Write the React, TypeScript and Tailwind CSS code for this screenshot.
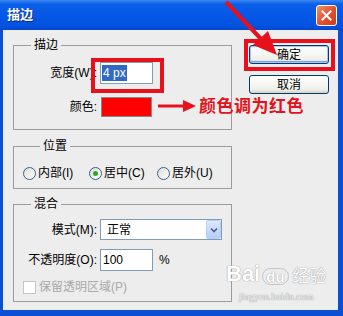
import React from "react";

const font = "font-['Liberation_Sans','Noto_Sans_CJK_SC',sans-serif]";

function Radio({ checked, label, width }: { checked?: boolean; label: string; width: string }) {
  return (
    <div className={`flex items-center gap-[2px] ${width}`}>
      <span className="w-[13px] h-[13px] rounded-full border border-[#3a5f8e] bg-[linear-gradient(135deg,#dcdcd6,#ffffff)] flex items-center justify-center">
        {checked && <span className="w-[5px] h-[5px] rounded-full bg-[#2fa52f]" />}
      </span>
      <span>{label}</span>
    </div>
  );
}

function XpButton({ label, primary }: { label: string; primary?: boolean }) {
  return (
    <button
      className={`w-[80px] h-[19px] rounded-[3px] border border-[#003c74] bg-[linear-gradient(to_bottom,#ffffff,#f0f0ea_80%,#d6d0c5)] text-[12px] leading-none text-black flex items-center justify-center ${
        primary ? "shadow-[inset_0_0_0_1px_#a8c4f0,inset_0_-1px_0_1px_#7aa2e6]" : ""
      }`}
    >
      {label}
    </button>
  );
}

export default function App() {
  return (
    <div className={`relative w-[343px] h-[316px] flex flex-col bg-[#0a4fd6] ${font} text-[12px] text-black overflow-hidden`}>
      {/* title bar */}
      <div className="h-[30px] flex items-center justify-between pl-[7px] pr-[6px] bg-[linear-gradient(to_bottom,#3b86f4_0%,#0a5fe8_14%,#0558e6_50%,#0452e0_85%,#0347cf_100%)]">
        <span className="text-white font-bold text-[13px] [text-shadow:1px_1px_0_#0b2f8a]">描边</span>
        <span className="w-[21px] h-[21px] rounded-[3px] border border-white bg-[linear-gradient(135deg,#f0926f,#e2542f_50%,#c93c1c)] flex items-center justify-center">
          <svg width="11" height="11" viewBox="0 0 11 11">
            <path d="M1.5 1.5 L9.5 9.5 M9.5 1.5 L1.5 9.5" stroke="white" strokeWidth="2" strokeLinecap="square" />
          </svg>
        </span>
      </div>

      {/* body */}
      <div className="flex-1 ml-[3px] mr-[5px] mb-[6px] bg-[#ededed] flex pl-[10px] pt-[8px]">
        <div className="w-[219px] flex flex-col">
          <fieldset className="border border-[#9c9c9c] pt-[10px] pb-[12px]">
            <legend className="ml-[17px] px-[3px] leading-[14px]">描边</legend>
            <div className="flex items-center h-[22px]">
              <span className="w-[83px] text-right">宽度(W):</span>
              <div className="ml-[3px] w-[53px] h-[22px] border border-[#7f9db9] bg-white flex items-center pl-[1px]">
                <span className="bg-[#316ac5] text-white px-[1px] leading-[16px]">4 px</span>
              </div>
            </div>
            <div className="flex items-center h-[20px] mt-[13px]">
              <span className="w-[83px] text-right">颜色:</span>
              <div className="ml-[4px] w-[51px] h-[20px] border border-[#8a8a8a] bg-[#ff0000]" />
            </div>
          </fieldset>

          <fieldset className="mt-[9px] border border-[#9c9c9c] pt-[13px] pb-[8px] pl-[9px]">
            <legend className="ml-[17px] px-[3px] leading-[14px]">位置</legend>
            <div className="flex items-center h-[14px]">
              <Radio label="内部(I)" width="w-[66px]" />
              <Radio label="居中(C)" width="w-[68px]" checked />
              <Radio label="居外(U)" width="w-[60px]" />
            </div>
          </fieldset>

          <fieldset className="mt-[8px] border border-[#9c9c9c] pt-[8px] pb-[7px]">
            <legend className="ml-[17px] px-[3px] leading-[14px]">混合</legend>
            <div className="flex items-center h-[21px]">
              <span className="w-[83px] text-right">模式(M):</span>
              <div className="ml-[3px] w-[122px] h-[21px] border border-[#7f9db9] bg-white flex items-center justify-between">
                <span className="pl-[6px]">正常</span>
                <span className="w-[15px] h-[19px] mr-[0px] rounded-[2px] border border-[#b9cdf5] bg-[linear-gradient(to_bottom,#dce8fd,#b7cdf8)] flex items-center justify-center">
                  <svg width="8" height="6" viewBox="0 0 8 6">
                    <path d="M1 1.5 L4 4.5 L7 1.5" fill="none" stroke="#4d6185" strokeWidth="1.6" />
                  </svg>
                </span>
              </div>
            </div>
            <div className="flex items-center h-[22px] mt-[9px]">
              <span className="w-[83px] text-right">不透明度(O):</span>
              <div className="ml-[3px] w-[53px] h-[22px] border border-[#7f9db9] bg-white flex items-center pl-[2px]">
                100
              </div>
              <span className="ml-[6px]">%</span>
            </div>
            <div className="flex items-center h-[14px] mt-[9px] pl-[9px] text-[#a9a9a9]">
              <span className="w-[13px] h-[13px] border border-[#c8c6bc] bg-white" />
              <span className="ml-[3px]">保留透明区域(P)</span>
            </div>
          </fieldset>
        </div>

        <div className="ml-[17px] mt-[7px] flex flex-col gap-[11px]">
          <XpButton label="确定" primary />
          <XpButton label="取消" />
        </div>
      </div>

      {/* watermark */}
      <div className="absolute left-[226px] top-[263px] flex flex-col items-center text-white [text-shadow:0_0_1px_#9a9a9a,0_0_1px_#9a9a9a] pointer-events-none">
        <div className="flex items-end gap-[2px] leading-none">
          <span className="text-[22px] font-bold font-['Liberation_Sans',sans-serif]">Bai</span>
          <span className="text-[15px] font-bold font-['Liberation_Sans',sans-serif] rounded-full px-[3px] border border-[#c4c4c4]">du</span>
          <span className="text-[17px] ml-[2px]">经验</span>
        </div>
        <span className="text-[10px] mt-[4px] font-['Liberation_Serif',serif] text-[#f4f4f4]">jingyan.baidu.com</span>
      </div>

      {/* annotations */}
      <div className="absolute left-[91px] top-[58px] w-[73px] h-[35px] border-[4px] border-[#e8101a] pointer-events-none" />
      <div className="absolute left-[244px] top-[39px] w-[91px] h-[32px] border-[4px] border-[#e8101a] pointer-events-none" />
      <span className="absolute left-[199px] top-[93px] text-[17px] tracking-[0.5px] font-bold text-[#e3121c] font-['Noto_Sans_CJK_SC',sans-serif] leading-[24px]">
        颜色调为红色
      </span>
      <svg className="absolute left-0 top-0 pointer-events-none" width="343" height="316" viewBox="0 0 343 316">
        <line x1="226" y1="2" x2="262" y2="40" stroke="#e8101a" strokeWidth="4" />
        <polygon points="277,55 253,45 268,31" fill="#e8101a" />
        <line x1="158" y1="106" x2="185" y2="106" stroke="#e8101a" strokeWidth="3" />
        <polygon points="183,100 196,106 183,112" fill="#e8101a" />
      </svg>
    </div>
  );
}
